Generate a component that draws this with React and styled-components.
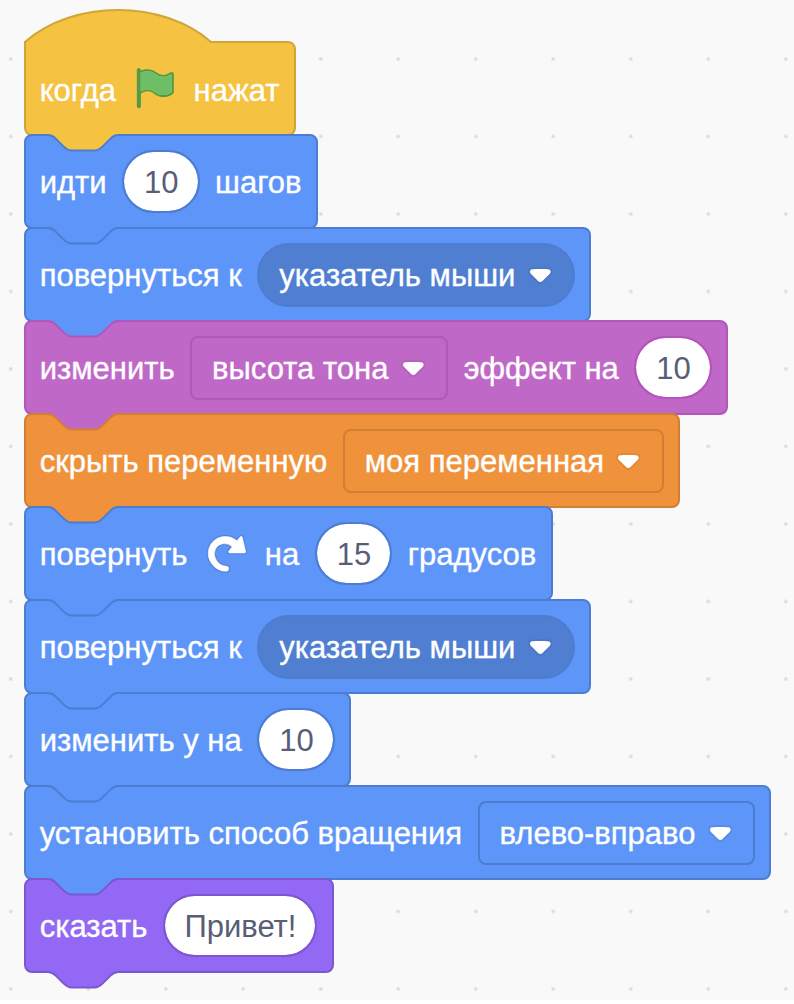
import React from 'react';
import styled, { createGlobalStyle } from 'styled-components';

const GlobalStyle = createGlobalStyle`
  body {
    margin: 0;
    background: #ffffff;
  }
`;

const palette = {
  events: { fill: '#f5c242', stroke: '#d0a638' },
  motion: { fill: '#5e95f9', stroke: '#4c7dd0', deep: '#507fd2' },
  sound: { fill: '#c068c8', stroke: '#b355bc' },
  data: { fill: '#f0923c', stroke: '#d27e34' },
  looks: { fill: '#9268f5', stroke: '#7a58cf' },
};

const Workspace = styled.main`
  box-sizing: border-box;
  width: 794px;
  height: 1000px;
  padding: 41px 0 0 24px;
  overflow: hidden;
  background-color: #f9f9f9;
  background-image: radial-gradient(circle, #dadada 0, #dcdcdc 1.2px, transparent 2.4px);
  background-size: 77.5px 77.5px;
  background-position: -28px 20.2px;
  font-family: 'Liberation Sans', Arial, sans-serif;
  font-size: 31px;
`;

const Stack = styled.div`
  display: flex;
  flex-direction: column;
  align-items: flex-start;
`;

const BlockBody = styled.div`
  position: relative;
  box-sizing: border-box;
  display: flex;
  align-items: center;
  gap: 15.5px;
  width: ${(p) => p.$width}px;
  height: 95px;
  margin-bottom: -2px;
  padding-left: 13.7px;
  border: 2px solid ${(p) => p.$tone.stroke};
  border-radius: ${(p) => (p.$hat ? '0 8px 8px 8px' : '8px')};
  background: ${(p) => p.$tone.fill};
  color: #ffffff;
  white-space: nowrap;
`;

const Label = styled.span`
  line-height: 36px;
  padding-top: ${(p) => (p.$low ? 4 : 2)}px;
  -webkit-text-stroke: 0.35px currentColor;
`;

const ValueInput = styled.span`
  box-sizing: border-box;
  display: flex;
  align-items: center;
  justify-content: center;
  min-width: 77.5px;
  height: 63px;
  padding: 2px 18.5px 0 19.5px;
  border: 2px solid ${(p) => p.$tone.stroke};
  border-radius: 32px;
  background: #ffffff;
  background-clip: padding-box;
  color: #575e75;
  line-height: 36px;
`;

const Dropdown = styled.span`
  box-sizing: border-box;
  display: flex;
  align-items: center;
  gap: 12.4px;
  height: 64px;
  padding: 0 20.8px 0 20px;
  border: 2px solid ${(p) => p.$tone.stroke};
  border-radius: ${(p) => (p.$round ? 32 : 8)}px;
  background: ${(p) => (p.$round ? p.$tone.deep : p.$tone.fill)};
`;

const ArrowIcon = styled.svg`
  display: block;
  width: 24.6px;
  height: 17px;
  margin-top: 2px;
`;

const BlockIcon = styled.svg`
  display: block;
  flex: none;
  width: 46.5px;
  height: 46.5px;
`;

const TabShape = styled.svg`
  position: absolute;
  z-index: 1;
  left: 21.8px;
  top: calc(100% + 1px);
  width: 70px;
  height: 17px;
  overflow: visible;
`;

const HatShape = styled.svg`
  position: absolute;
  left: -2px;
  top: -36px;
  width: 190px;
  height: 38px;
  overflow: visible;
`;

function Arrow() {
  return (
    <ArrowIcon viewBox="0 0 12.71 8.79">
      <path
        d="M12.71 2.44A2.41 2.41 0 0 1 12 4.16L8.08 8.08a2.45 2.45 0 0 1-3.45 0L.72 4.16A2.42 2.42 0 0 1 0 2.44 2.48 2.48 0 0 1 .71.71C1 .47 1.43 0 6.36 0s5.39.46 5.64.71a2.44 2.44 0 0 1 .71 1.73z"
        fill="#231f20"
        opacity="0.07"
      />
      <path
        d="M6.36 7.79a1.43 1.43 0 0 1-1-.42L1.42 3.45a1.44 1.44 0 0 1 0-2c.56-.56 9.31-.56 9.87 0a1.44 1.44 0 0 1 0 2L7.37 7.37a1.43 1.43 0 0 1-1.01.42z"
        fill="#fff"
      />
    </ArrowIcon>
  );
}

function GreenFlag() {
  return (
    <BlockIcon viewBox="0 0 24 24">
      <path
        d="M20.8 3.7c-.4-.2-.9-.1-1.2.2-2 1.6-4.8 1.6-6.8 0-2.3-1.9-5.6-2.3-8.3-1v-.4c0-.6-.5-1-1-1s-1 .4-1 1v18.8c0 .5.5 1 1 1h.1c.5 0 1-.4 1-1v-6.4c1-.7 2.1-1.2 3.4-1.3 1.2 0 2.4.4 3.4 1.2 2.9 2.3 7 2.3 9.8 0 .3-.2.4-.5.4-.9V4.7c0-.5-.3-.9-.8-1zm-.3 10.2C18 16 14.4 16 11.9 14c-1.1-.9-2.5-1.4-4-1.4-1.2.1-2.3.5-3.4 1.1V4c2.5-1.4 5.5-1.1 7.7.6 2.4 1.9 5.7 1.9 8.1 0h.1c.1 0 .1.1.1.1v9.2z"
        fill="#539b44"
      />
      <path
        d="M20.6 4.8v9.1c-2.5 2.1-6.1 2.1-8.7.1-1.1-.9-2.5-1.4-4-1.4-1.2.1-2.3.5-3.4 1.1V4c2.5-1.4 5.5-1.1 7.7.6 2.4 1.9 5.7 1.9 8.1 0h.2z"
        fill="#6dbe66"
      />
    </BlockIcon>
  );
}

function TurnRight() {
  const arrow =
    'M21.38 11.83h-7.61a.59.59 0 0 1-.43-1l1.75-2.19a5.9 5.9 0 0 0-4.7-1.58 5.07 5.07 0 0 0-4.11 3.17A6 6 0 0 0 7 15.77a6.51 6.51 0 0 0 5 2.92 1.31 1.31 0 0 1-.08 2.62 9.3 9.3 0 0 1-7.35-3.82 9.16 9.16 0 0 1-1.4-8.37A8.51 8.51 0 0 1 5.71 5.4a8.76 8.76 0 0 1 4.11-1.92 9.71 9.71 0 0 1 7.75 2.07l1.67-2.1a.59.59 0 0 1 1 .21L22 11.08a.59.59 0 0 1-.62.75z';
  return (
    <BlockIcon viewBox="0 0 24 24">
      <path d={arrow} fill="none" stroke={palette.motion.stroke} strokeWidth="1.5" strokeLinejoin="round" opacity="0.8" />
      <path d={arrow} fill="#fff" stroke="#fff" strokeWidth="0.3" />
    </BlockIcon>
  );
}

const TAB =
  'c3.9 0 5.8 1.9 7.75 3.9l7.75 7.75c1.9 1.9 3.9 3.85 7.75 3.85h23.25c3.9 0 5.8-1.9 7.75-3.85l7.75-7.75c1.9-2 3.9-3.9 7.75-3.9';

function Tab({ fill, stroke }) {
  return (
    <TabShape>
      <path d={`M0.25 0${TAB}v-1.2h-69.75z`} fill={fill} />
      <path d={`M0.25 0${TAB}`} fill="none" stroke={stroke} strokeWidth="1.94" />
    </TabShape>
  );
}

function HatCurve({ tone }) {
  return (
    <HatShape>
      <path d="M2 37V35c48.4-42.6 136.6-42.6 185 0l-2 1.2z" fill={tone.fill} />
      <path d="M1 38V35c48.4-42.6 137.6-42.6 186 0" fill="none" stroke={tone.stroke} strokeWidth="1.94" />
    </HatShape>
  );
}

function Block({ kind, next, width, hat, children }) {
  const tone = palette[kind];
  return (
    <BlockBody $tone={tone} $width={width} $hat={hat}>
      {hat && <HatCurve tone={tone} />}
      {children}
      <Tab fill={tone.fill} stroke={palette[next || kind].stroke} />
    </BlockBody>
  );
}

function Value({ kind = 'motion', children }) {
  return (
    <ValueInput $tone={palette[kind]}>
      <span>{children}</span>
    </ValueInput>
  );
}

function Menu({ kind = 'motion', round, children }) {
  return (
    <Dropdown $tone={palette[kind]} $round={round}>
      <Label>{children}</Label>
      <Arrow />
    </Dropdown>
  );
}

export default function App() {
  return (
    <>
      <GlobalStyle />
      <Workspace>
        <Stack>
          <Block kind="events" next="motion" width={272} hat>
            <Label $low>когда</Label>
            <GreenFlag />
            <Label $low>нажат</Label>
          </Block>
          <Block kind="motion" width={294}>
            <Label>идти</Label>
            <Value>10</Value>
            <Label>шагов</Label>
          </Block>
          <Block kind="motion" next="sound" width={567}>
            <Label>повернуться к</Label>
            <Menu round>указатель мыши</Menu>
          </Block>
          <Block kind="sound" next="data" width={704}>
            <Label>изменить</Label>
            <Menu kind="sound">высота тона</Menu>
            <Label>эффект на</Label>
            <Value kind="sound">10</Value>
          </Block>
          <Block kind="data" next="motion" width={656}>
            <Label>скрыть переменную</Label>
            <Menu kind="data">моя переменная</Menu>
          </Block>
          <Block kind="motion" width={528.5}>
            <Label>повернуть</Label>
            <TurnRight />
            <Label>на</Label>
            <Value>15</Value>
            <Label>градусов</Label>
          </Block>
          <Block kind="motion" width={567}>
            <Label>повернуться к</Label>
            <Menu round>указатель мыши</Menu>
          </Block>
          <Block kind="motion" width={327}>
            <Label>изменить y на</Label>
            <Value>10</Value>
          </Block>
          <Block kind="motion" next="looks" width={747}>
            <Label>установить способ вращения</Label>
            <Menu>влево-вправо</Menu>
          </Block>
          <Block kind="looks" width={310}>
            <Label>сказать</Label>
            <Value kind="looks">Привет!</Value>
          </Block>
        </Stack>
      </Workspace>
    </>
  );
}
